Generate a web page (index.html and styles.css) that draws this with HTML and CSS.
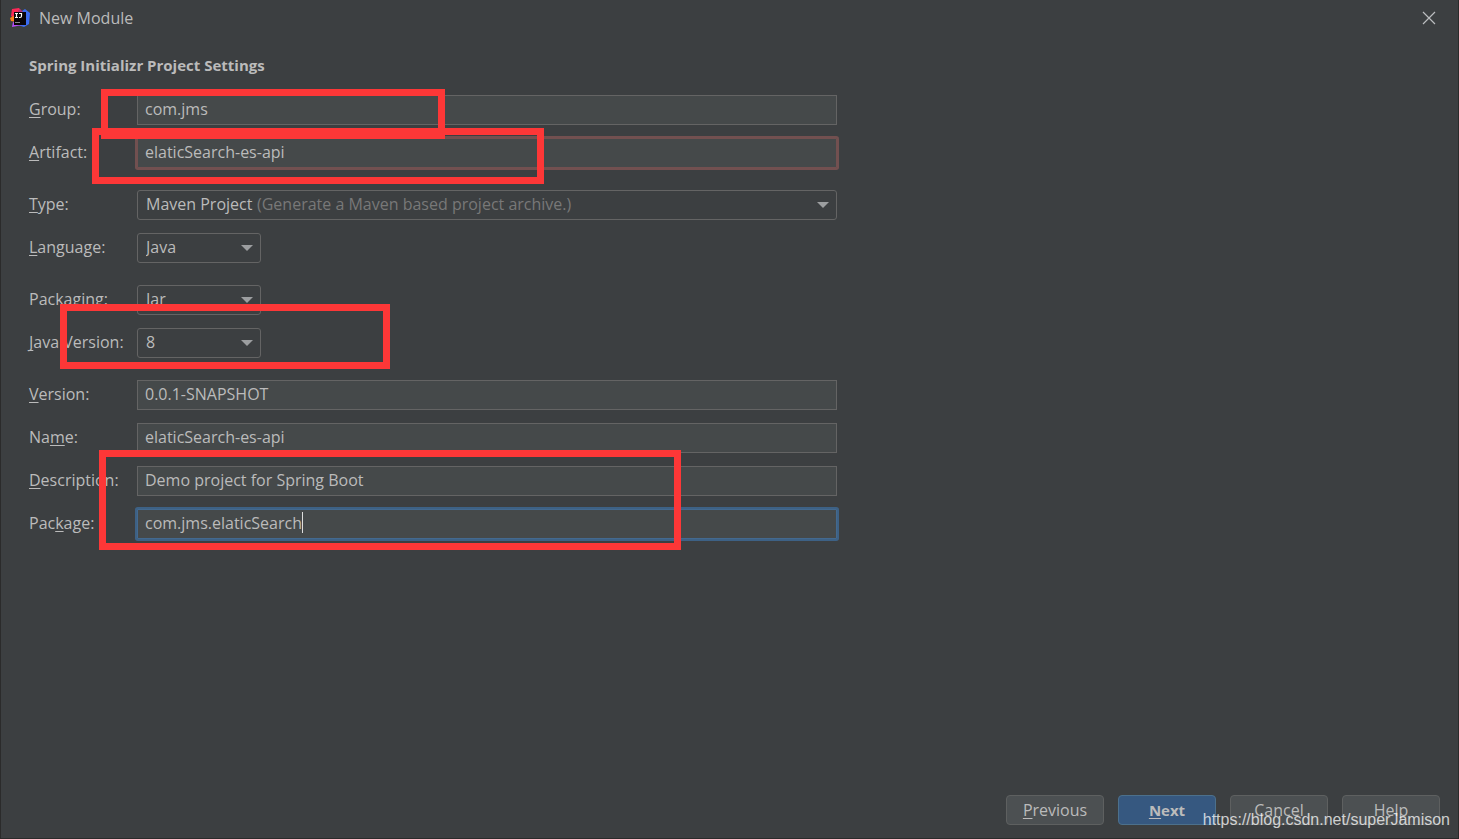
FILE: index.html
```html
<!DOCTYPE html>
<html lang="en">

<head>
    <meta charset="UTF-8">
    <meta name="viewport" content="width=device-width, initial-scale=1.0">
    <title>New Module</title>
    <link rel="stylesheet" href="styles.css">
</head>

<body>
    <header class="titlebar">
        <svg class="logo" width="20" height="20" viewBox="0 0 20 20" aria-hidden="true">
            <path d="M2 1 L9 0 L12 4 L8 14 L1 8 Z" fill="#fe2857"/>
            <path d="M0 10 L5 7 L6 14 L1 13 Z" fill="#fc801d"/>
            <path d="M12 3 L15 1 L20 5 L19 16 L14 19 L8 17 Z" fill="#3b6cf0"/>
            <path d="M2 19 L3 14 L12 16 L12 17 Z" fill="#b74af7"/>
            <path d="M10 1 L13 4 L10 5 L8 3 Z" fill="#b12f7c"/>
            <rect x="4" y="4" width="12" height="13" fill="#0a0508"/>
            <path d="M5 5.500h3M6.500 5v5M5 9.500h3M9 5.500h3M11.500 5v3q0 1.500-1.500 1.500H9" fill="none" stroke="#fff" stroke-width="1.200"/>
            <path d="M5 14.500h5" stroke="#888" stroke-width="1"/>
        </svg>
        <h1>New Module</h1>
        <button type="button" class="close-btn" aria-label="Close">
            <svg width="14" height="14" viewBox="0 0 14 14" aria-hidden="true">
                <path d="M1 1L13 13M13 1L1 13" stroke="#bbbdbf" stroke-width="1.200"/>
            </svg>
        </button>
    </header>

    <form class="settings" id="settings">
        <h2>Spring Initializr Project Settings</h2>
        <div class="group">
            <div class="row">
                <label for="group"><u>G</u>roup:</label>
                <input type="text" id="group" value="com.jms">
            </div>
            <div class="row">
                <label for="artifact"><u>A</u>rtifact:</label>
                <input type="text" id="artifact" class="error" value="elaticSearch-es-api">
            </div>
        </div>
        <div class="group">
            <div class="row">
                <label for="type"><u>T</u>ype:</label>
                <div class="select wide">
                    <select id="type">
                        <option>Maven Project</option>
                        <option>Gradle Project</option>
                    </select>
                    <span class="hint">(Generate a Maven based project archive.)</span>
                </div>
            </div>
            <div class="row">
                <label for="language"><u>L</u>anguage:</label>
                <div class="select">
                    <select id="language">
                        <option>Java</option>
                        <option>Kotlin</option>
                        <option>Groovy</option>
                    </select>
                </div>
            </div>
        </div>
        <div class="group">
            <div class="row">
                <label for="packaging">Packaging:</label>
                <div class="select">
                    <select id="packaging">
                        <option>Jar</option>
                        <option>War</option>
                    </select>
                </div>
            </div>
            <div class="row">
                <label for="java-version"><u>J</u>ava Version:</label>
                <div class="select">
                    <select id="java-version">
                        <option>8</option>
                        <option>11</option>
                    </select>
                </div>
            </div>
        </div>
        <div class="group">
            <div class="row">
                <label for="version"><u>V</u>ersion:</label>
                <input type="text" id="version" value="0.0.1-SNAPSHOT">
            </div>
            <div class="row">
                <label for="name">Na<u>m</u>e:</label>
                <input type="text" id="name" value="elaticSearch-es-api">
            </div>
            <div class="row">
                <label for="description"><u>D</u>escription:</label>
                <input type="text" id="description" value="Demo project for Spring Boot">
            </div>
            <div class="row">
                <label for="package">Pac<u>k</u>age:</label>
                <div class="field">
                    <input type="text" id="package" class="active" value="com.jms.elaticSearch">
                    <span class="caret"></span>
                </div>
            </div>
        </div>
    </form>

    <footer class="actions">
        <button type="button"><u>P</u>revious</button>
        <button type="submit" form="settings" class="primary"><u>N</u>ext</button>
        <button type="button">Cancel</button>
        <button type="button">Help</button>
    </footer>

    <!-- Red marker boxes over the form -->
    <div class="mark mark-group"></div>
    <div class="mark mark-artifact"></div>
    <div class="mark mark-java"></div>
    <div class="mark mark-package"></div>
    <span class="watermark">https://blog.csdn.net/superJamison</span>
</body>

</html>
```
FILE: styles.css
```css
* {
    box-sizing: border-box;
}

body {
    position: relative;
    display: flex;
    flex-direction: column;
    min-height: 100vh;
    margin: 0;
    border: 1px solid #2b2b2b;
    border-top: none;
    background-color: #3c3f41;
    color: #bbbbbb;
    font-family: "Open Sans", "Noto Sans", sans-serif;
    font-size: 16px;
    line-height: 20px;
}

u {
    text-underline-offset: 2px;
    text-decoration-thickness: 1px;
    text-decoration-skip-ink: none;
}

.titlebar {
    display: flex;
    align-items: center;
    height: 36px;
    padding: 0 22px 0 9px;
}

.titlebar h1 {
    flex: 1;
    margin: 0 0 0 9px;
    font-size: 16px;
    font-weight: 400;
}

.close-btn {
    display: flex;
    padding: 0;
    border: none;
    background: none;
}

.settings {
    flex: 1;
    max-width: 836px;
    padding: 19px 0 0 28px;
}

.settings h2 {
    margin: 0 0 20px;
    font-size: 15px;
    font-weight: 700;
}

.group {
    display: grid;
    gap: 13px;
    margin-bottom: 22px;
}

.row {
    display: grid;
    grid-template-columns: 108px 1fr;
    align-items: center;
}

.row label {
    padding-bottom: 2px;
}

input,
select {
    display: block;
    width: 100%;
    height: 30px;
    border: 1px solid #646464;
    color: #bbbbbb;
    font: inherit;
    outline: none;
}

input {
    padding: 0 7px 2px;
    background-color: #45494a;
}

input.error {
    border-color: #725050;
    border-radius: 1px;
    box-shadow: 0 0 0 2px #725050;
}

input.active {
    border-color: #43698f;
    border-radius: 1px;
    box-shadow: 0 0 0 2px #3d6185;
}

.field {
    position: relative;
}

.caret {
    position: absolute;
    top: 3px;
    left: 165px;
    width: 1px;
    height: 21px;
    background-color: #dddddd;
}

.select {
    position: relative;
    width: 124px;
}

.select.wide {
    width: 100%;
}

.select select {
    appearance: none;
    padding: 0 8px 2px;
    border-radius: 3px;
    background-color: #3c3f41;
}

.select::after {
    content: "";
    position: absolute;
    top: 12px;
    right: 8px;
    border: 6px solid transparent;
    border-top-color: #9c9ea0;
    border-bottom: none;
    pointer-events: none;
}

.hint {
    position: absolute;
    top: 4px;
    left: 120px;
    color: #787878;
    pointer-events: none;
}

.actions {
    display: flex;
    justify-content: flex-end;
    gap: 14px;
    padding: 0 18px 13px;
}

.actions button {
    width: 98px;
    height: 30px;
    padding: 0;
    border: 1px solid #5e6060;
    border-radius: 4px;
    background-color: #4c5052;
    color: #bbbbbb;
    font: inherit;
}

.actions .primary {
    border-color: #4c708c;
    background-color: #365880;
    font-size: 15px;
    font-weight: 700;
}

.mark {
    position: absolute;
    border: 7px solid #fd3737;
    pointer-events: none;
}

.mark-group {
    top: 89px;
    left: 100px;
    width: 344px;
    height: 50px;
    border-bottom-width: 10px;
}

.mark-artifact {
    top: 128px;
    left: 91px;
    width: 452px;
    height: 56px;
}

.mark-java {
    top: 304px;
    left: 59px;
    width: 330px;
    height: 65px;
}

.mark-package {
    top: 450px;
    left: 98px;
    width: 582px;
    height: 100px;
}

.watermark {
    position: absolute;
    right: 8px;
    bottom: 8px;
    color: rgba(255, 255, 255, 0.75);
    font-family: "Liberation Sans", Arial, sans-serif;
    font-size: 16px;
    pointer-events: none;
}
```
